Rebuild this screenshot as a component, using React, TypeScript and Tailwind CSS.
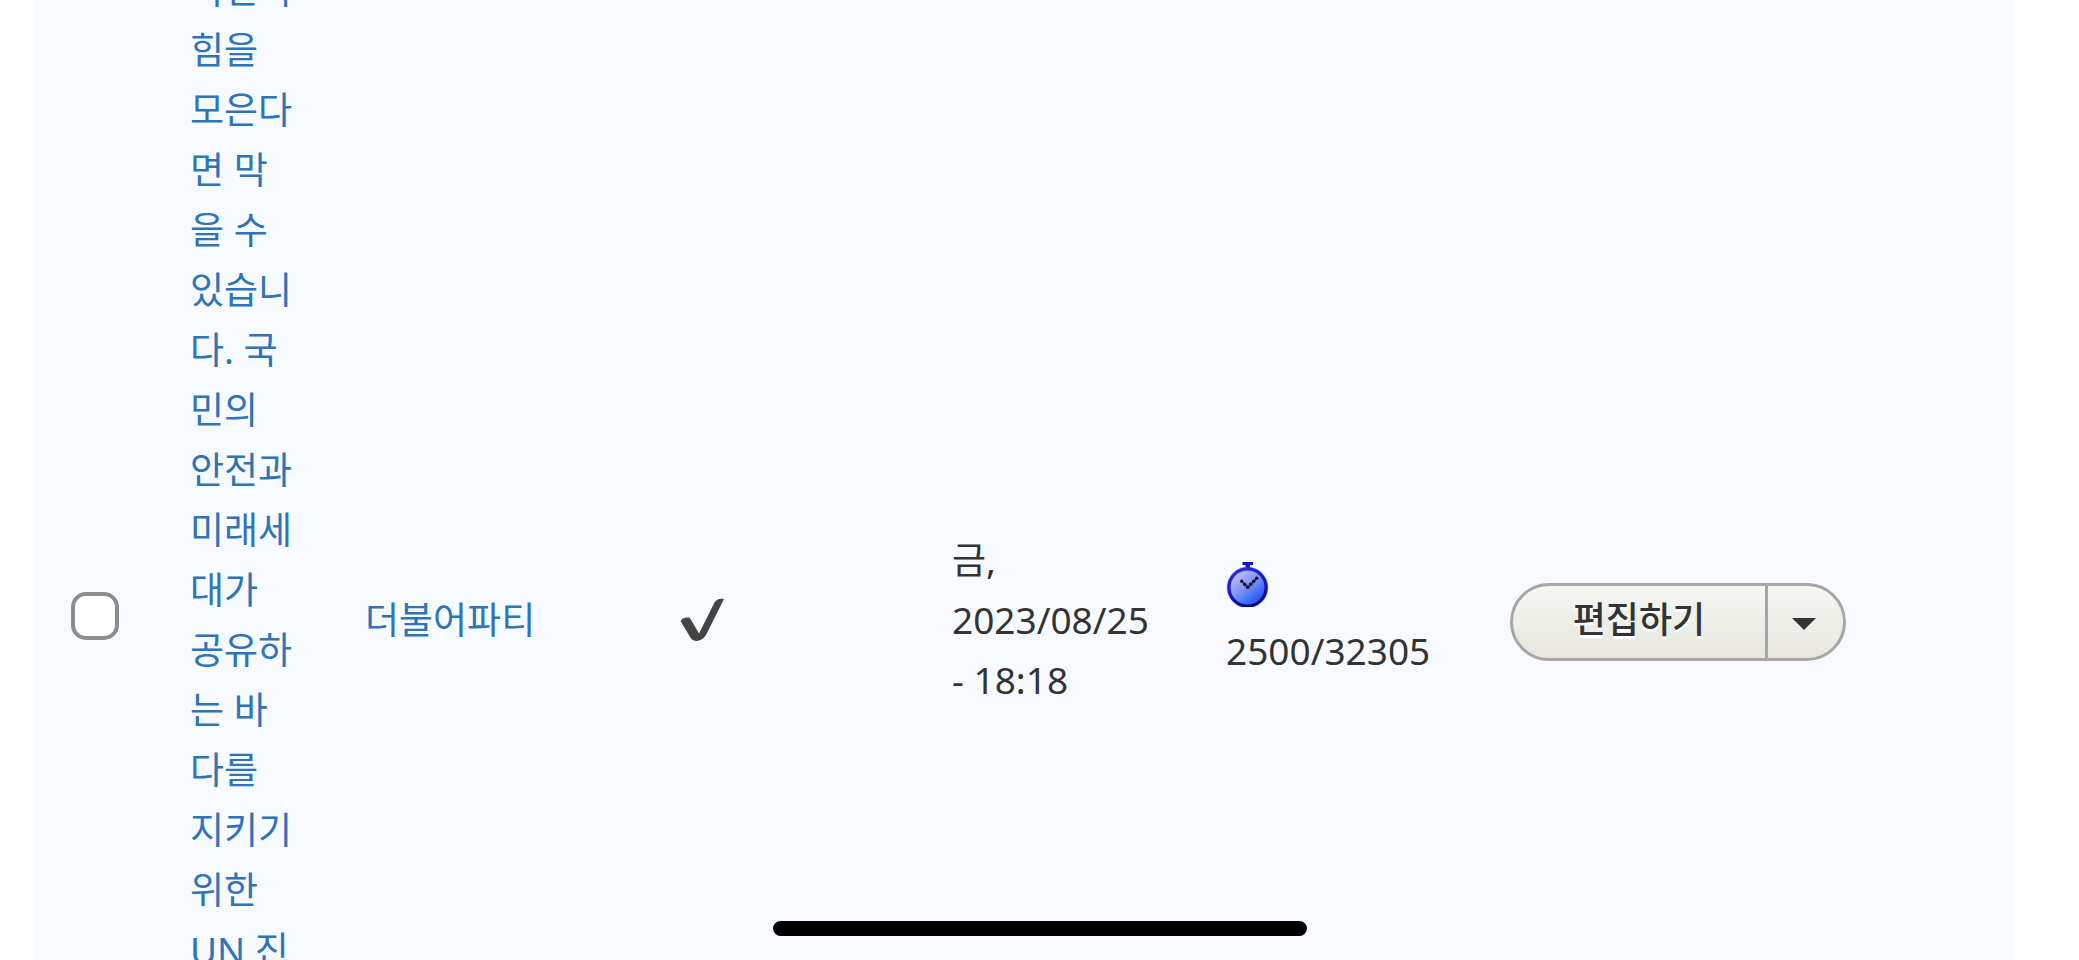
import { useState } from 'react';

const post = {
  title:
    '국민의 힘을 모은다면 막을 수 있습니다. 국민의 안전과 미래세대가 공유하는 바다를 지키기 위한 UN 진',
  author: '더불어파티',
  updated: ['금,', '2023/08/25', '- 18:18'],
  counter: '2500/32305',
};

function CheckMark() {
  return (
    <svg width="44" height="44" viewBox="0 0 44 44" role="img" aria-label="게시됨" className="block">
      <path
        d="M0.5 23 C2.500 20 5.500 19 8.500 19.500 Q10 19.800 10.500 21 L19 35.500 L34.500 4.500 C36.500 1 40 0 44 1 L26.500 36 C23 43 14.500 45 11 40.500 Z"
        fill="#444444"
      />
    </svg>
  );
}

function Stopwatch() {
  return (
    <svg width="44" height="45" viewBox="0 0 44 45" aria-hidden="true" className="block">
      <defs>
        <linearGradient id="face" x1="0.150" y1="0.100" x2="0.800" y2="0.900">
          <stop offset="0" stopColor="#c4c0f6" />
          <stop offset="0.400" stopColor="#8c9af6" />
          <stop offset="0.800" stopColor="#3a6cfb" />
          <stop offset="1" stopColor="#2b55f0" />
        </linearGradient>
        <linearGradient id="rim" x1="0" y1="0" x2="0.400" y2="1">
          <stop offset="0" stopColor="#2a2ae0" />
          <stop offset="0.600" stopColor="#1616c4" />
          <stop offset="1" stopColor="#08088a" />
        </linearGradient>
      </defs>
      <path d="M16.500 0h10.500v3h-3v5h-4.500v-5h-3z" fill="#1010d0" />
      <circle cx="21.500" cy="25.500" r="21" fill="#5a5ae6" opacity="0.350" />
      <circle cx="21.500" cy="25.500" r="18.600" fill="url(#face)" stroke="url(#rim)" strokeWidth="3.200" />
      <path d="M15.700 19.300L21.700 25.300L30.700 16.300" fill="none" stroke="#2c3a80" strokeWidth="1.800" />
      <g fill="#0a0f20">
        <circle cx="15.700" cy="19.300" r="1.700" />
        <circle cx="18.700" cy="22.300" r="1.700" />
        <circle cx="21.700" cy="25.300" r="1.700" />
        <circle cx="24.700" cy="22.300" r="1.700" />
        <circle cx="27.700" cy="19.300" r="1.700" />
        <circle cx="30.700" cy="16.300" r="1.700" />
      </g>
    </svg>
  );
}

function EditButton() {
  return (
    <div className="mt-1 flex h-[78px] w-[336px] overflow-hidden rounded-full border-3 border-[#a6a6a6] bg-linear-to-b from-[#f6f6f3] to-[#e7e7df]">
      <button
        type="button"
        className="flex-1 pb-1 text-center text-[36px] leading-[60px] font-medium text-[#333] [text-shadow:0_3px_0_#fff]"
      >
        편집하기
      </button>
      <button
        type="button"
        aria-label="다른 작업"
        className="flex w-[78px] items-center border-l-3 border-[#a6a6a6] pl-6"
      >
        <svg width="24" height="12" viewBox="0 0 24 12" className="mt-1">
          <path d="M0 0h24l-12 12z" fill="#333333" />
        </svg>
      </button>
    </div>
  );
}

export default function App() {
  const [selected, setSelected] = useState(false);

  return (
    <main
      lang="ko"
      className="h-screen overflow-hidden bg-white pr-[66px] pl-[35px] font-['Noto_Sans','Noto_Sans_CJK_KR',sans-serif] text-[37px] leading-[60px] text-[#333]"
    >
      <table className="-mt-10 w-full table-fixed bg-[#f7fbff]">
        <colgroup>
          <col className="w-[119px]" />
          <col className="w-[175px]" />
          <col className="w-[315px]" />
          <col className="w-[272px]" />
          <col className="w-[274px]" />
          <col className="w-[284px]" />
          <col />
        </colgroup>
        <tbody>
          <tr>
            <td className="pl-9">
              <input
                type="checkbox"
                aria-label="게시물 선택"
                checked={selected}
                onChange={(e) => setSelected(e.target.checked)}
                className="mb-2 block size-12 appearance-none rounded-[15px] border-4 border-[#8c8c8c] bg-white checked:bg-[#2f73b8]"
              />
            </td>
            <td className="pr-9 pb-[300px] pl-9">
              <a href="#post" className="text-[#2f73b8]">
                {post.title}
              </a>
            </td>
            <td className="pl-9">
              <a href="#author" className="text-[#2f73b8]">
                {post.author}
              </a>
            </td>
            <td className="pl-9">
              <CheckMark />
            </td>
            <td className="pl-9 whitespace-nowrap">
              {post.updated.map((line) => (
                <div key={line}>{line}</div>
              ))}
            </td>
            <td className="pl-9 whitespace-nowrap">
              <div className="pt-[2px] pb-[14px]">
                <Stopwatch />
              </div>
              <div>{post.counter}</div>
            </td>
            <td className="pl-9">
              <EditButton />
            </td>
          </tr>
        </tbody>
      </table>

      {/* home indicator */}
      <div className="fixed bottom-6 left-1/2 h-[15px] w-[534px] -translate-x-1/2 rounded-full bg-black" />
    </main>
  );
}
